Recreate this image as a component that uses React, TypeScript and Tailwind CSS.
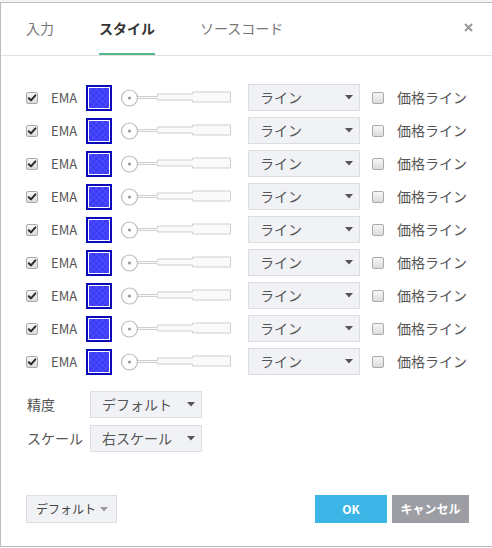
import React from "react";

const FONT = { fontFamily: '"Noto Sans CJK JP", "Noto Sans", sans-serif' };

function CheckBox({ checked }: { checked?: boolean }) {
  return (
    <div className="w-[12px] h-[12px] rounded-[2px] border border-[#a9a9a9] bg-[linear-gradient(#f6f6f6,#dcdcdc)] flex items-center justify-center shrink-0">
      {checked && (
        <svg width="10" height="10" viewBox="0 0 10 10">
          <path d="M1.8 5.2 L4 7.4 L8.4 2.4" fill="none" stroke="#2b2b2b" strokeWidth="2" strokeLinecap="round" strokeLinejoin="round" />
        </svg>
      )}
    </div>
  );
}

function Caret({ color = "#555" }: { color?: string }) {
  return (
    <svg width="8" height="5" viewBox="0 0 8 5">
      <path d="M0 0 L8 0 L4 4.5 Z" fill={color} />
    </svg>
  );
}

function Swatch() {
  return (
    <div className="w-[26px] h-[26px] border-2 border-[#0a0ab8] p-px bg-white shrink-0">
      <svg width="20" height="20" viewBox="0 0 20 20" className="block">
        <defs>
          <pattern id="chk" width="6" height="6" patternUnits="userSpaceOnUse">
            <rect width="6" height="6" fill="#3b3bf2" />
            <rect width="3" height="3" fill="#4848ff" />
            <rect x="3" y="3" width="3" height="3" fill="#4848ff" />
          </pattern>
        </defs>
        <rect width="20" height="20" fill="url(#chk)" />
      </svg>
    </div>
  );
}

function Slider() {
  return (
    <svg width="112" height="20" viewBox="0 0 112 20" className="block shrink-0">
      <path d="M17 8.5 H37.5 V6 H72.5 V4 H110.5 V14 H72.5 V12 H37.5 V10.5 H17 Z" fill="#fafafa" stroke="#cfcfcf" strokeWidth="1" />
      <circle cx="9.5" cy="10" r="8" fill="#fff" stroke="#b8bcc4" strokeWidth="1.2" />
      <circle cx="9.5" cy="10" r="1.6" fill="#9a9a9a" />
    </svg>
  );
}

function Select({ label, w = "w-[112px]" }: { label: string; w?: string }) {
  return (
    <div className={`${w} h-[27px] bg-[#f1f2f6] border border-[#dcdee3] flex items-center justify-between pl-[11px] pr-[6px] text-[14px] text-[#555] whitespace-nowrap`}>
      <span>{label}</span>
      <Caret />
    </div>
  );
}

function Row() {
  return (
    <div className="flex items-center h-[27px]">
      <div className="ml-[25px]"><CheckBox checked /></div>
      <span className="ml-[13px] text-[13px] text-[#555] w-[35px]">EMA</span>
      <Swatch />
      <div className="ml-[8px]"><Slider /></div>
      <div className="ml-[16px]"><Select label="ライン" /></div>
      <div className="ml-[12px]"><CheckBox /></div>
      <span className="ml-[13px] text-[14px] text-[#555] whitespace-nowrap">価格ライン</span>
    </div>
  );
}

export default function App() {
  return (
    <div className="w-[492px] h-[548px] bg-white overflow-hidden" style={FONT}>
      <div className="h-[2px] bg-[#f4f4f4]" />
      <div className="h-[545px] border-l border-t border-b border-[#bcbcbc] flex flex-col">
        <div className="h-[53px] border-b border-[#e2e2e2] flex items-end pl-[25px] relative">
          <div className="flex gap-[45px] text-[14px]">
            <div className="h-[37px] text-[#777]">入力</div>
            <div className="h-[37px] text-[#333] font-bold border-b-2 border-[#55b88a]">スタイル</div>
            <div className="h-[37px] text-[#777]">ソースコード</div>
          </div>
          <svg width="9" height="9" viewBox="0 0 9 9" className="absolute right-[19px] top-[20px]">
            <path d="M1 1 L8 8 M8 1 L1 8" stroke="#999" strokeWidth="2" />
          </svg>
        </div>
        <div className="pt-[28px] flex flex-col gap-[6px]">
          {Array.from({ length: 9 }).map((_, i) => (
            <Row key={i} />
          ))}
        </div>
        <div className="mt-[16px] flex flex-col gap-[7px]">
          <div className="flex items-center">
            <span className="ml-[26px] w-[63px] text-[14px] text-[#555]">精度</span>
            <Select label="デフォルト" w="w-[112px]" />
          </div>
          <div className="flex items-center">
            <span className="ml-[26px] w-[63px] text-[14px] text-[#555]">スケール</span>
            <Select label="右スケール" w="w-[112px]" />
          </div>
        </div>
        <div className="mt-[43px] flex items-center">
          <div className="ml-[25px] w-[91px] h-[28px] bg-[#f1f2f6] border border-[#dcdee3] flex items-center justify-between pl-[9px] pr-[8px] text-[12px] text-[#444] whitespace-nowrap">
            <span>デフォルト</span>
            <Caret color="#999" />
          </div>
          <div className="ml-auto w-[72px] h-[28px] bg-[#3cb4e5] text-white text-[12px] font-bold flex items-center justify-center">OK</div>
          <div className="ml-[5px] mr-[23px] w-[77px] h-[28px] bg-[#9c9ea4] text-white text-[12px] font-bold flex items-center justify-center whitespace-nowrap">キャンセル</div>
        </div>
      </div>
    </div>
  );
}
